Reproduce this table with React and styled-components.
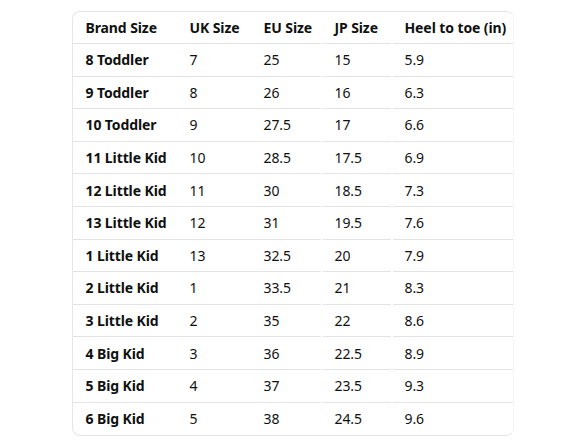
import React from "react";
import styled, { createGlobalStyle } from "styled-components";

const Global = createGlobalStyle`
  html, body { margin: 0; padding: 0; background: #ffffff; }
  body { font-family: "Noto Sans", "Open Sans", Arial, sans-serif; color: #0f1111; }
`;

const Page = styled.div`
  padding: 11px 0 0 72px;
`;

const Card = styled.div`
  width: 442px;
  box-sizing: border-box;
  border: 1px solid #e6e6e6;
  border-right-color: #f6f6f6;
  border-radius: 8px;
  overflow: hidden;
`;

const Row = styled.div`
  display: grid;
  grid-template-columns: 104px 74px 71px 70px 121px;
  height: ${(p) => (p.$head ? "32px" : "32.6px")};
  box-sizing: border-box;
  border-bottom: ${(p) => (p.$last ? "none" : "1px solid #e3e3e3")};
  align-items: center;
`;

const Cell = styled.div`
  position: relative;
  height: 100%;
  display: flex;
  align-items: center;
  padding-left: 12.5px;
  font-size: 14px;
  font-weight: ${(p) => (p.$bold ? 700 : 400)};
  white-space: nowrap;
  letter-spacing: -0.1px;
  &::after {
    content: "";
    display: ${(p) => (p.$gap ? "block" : "none")};
    position: absolute;
    right: -1px;
    bottom: -1px;
    width: 2px;
    height: 1px;
    background: #ffffff;
  }
`;

const head = ["Brand Size", "UK Size", "EU Size", "JP Size", "Heel to toe (in)"];
const rows = [
  ["8 Toddler", "7", "25", "15", "5.9"],
  ["9 Toddler", "8", "26", "16", "6.3"],
  ["10 Toddler", "9", "27.5", "17", "6.6"],
  ["11 Little Kid", "10", "28.5", "17.5", "6.9"],
  ["12 Little Kid", "11", "30", "18.5", "7.3"],
  ["13 Little Kid", "12", "31", "19.5", "7.6"],
  ["1 Little Kid", "13", "32.5", "20", "7.9"],
  ["2 Little Kid", "1", "33.5", "21", "8.3"],
  ["3 Little Kid", "2", "35", "22", "8.6"],
  ["4 Big Kid", "3", "36", "22.5", "8.9"],
  ["5 Big Kid", "4", "37", "23.5", "9.3"],
  ["6 Big Kid", "5", "38", "24.5", "9.6"],
];

export default function App() {
  return (
    <>
      <Global />
      <Page>
        <Card>
          <Row $head>
            {head.map((h, i) => (
              <Cell key={h} $bold $gap={i === 2 || i === 3}>
                {h}
              </Cell>
            ))}
          </Row>
          {rows.map((r, ri) => (
            <Row key={r[0]} $last={ri === rows.length - 1}>
              {r.map((c, i) => (
                <Cell key={i} $bold={i === 0} $gap={i === 2 || i === 3}>
                  {c}
                </Cell>
              ))}
            </Row>
          ))}
        </Card>
      </Page>
    </>
  );
}
